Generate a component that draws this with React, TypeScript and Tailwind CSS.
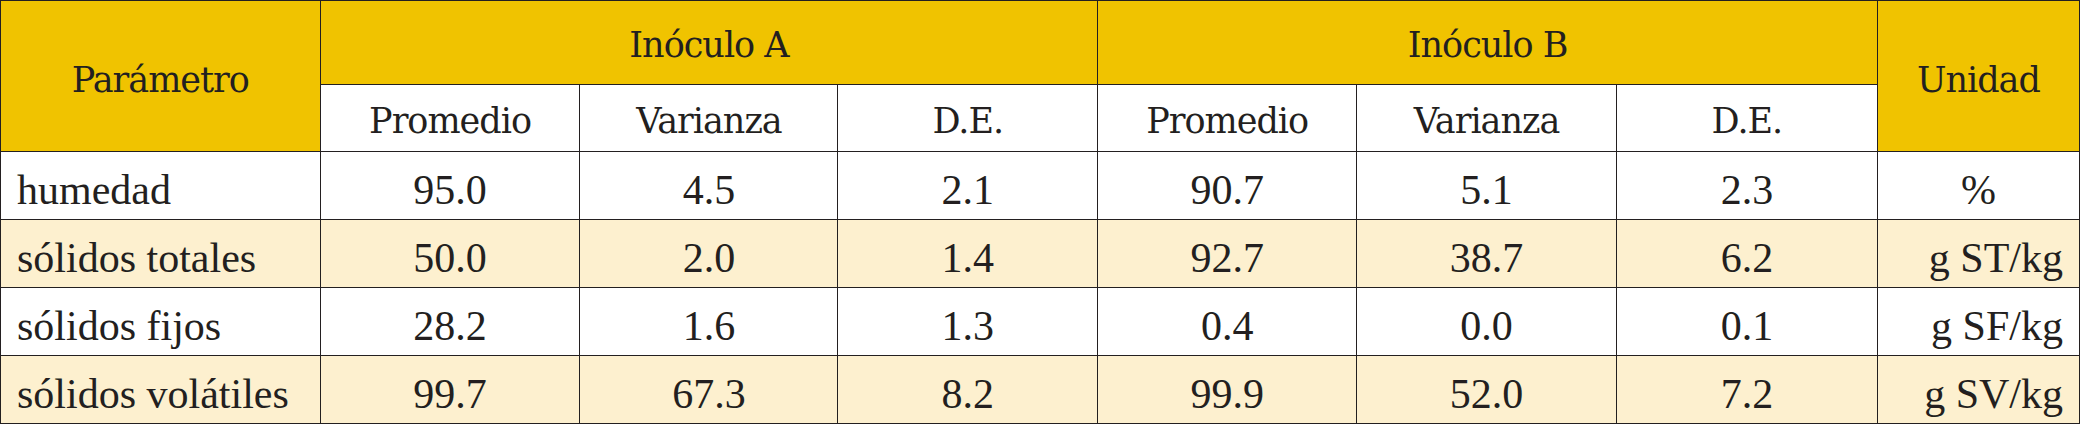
const rows = [
  { p: "humedad", v: ["95.0", "4.5", "2.1", "90.7", "5.1", "2.3"], u: "%", alt: false },
  { p: "sólidos totales", v: ["50.0", "2.0", "1.4", "92.7", "38.7", "6.2"], u: "g ST/kg", alt: true },
  { p: "sólidos fijos", v: ["28.2", "1.6", "1.3", "0.4", "0.0", "0.1"], u: "g SF/kg", alt: false },
  { p: "sólidos volátiles", v: ["99.7", "67.3", "8.2", "99.9", "52.0", "7.2"], u: "g SV/kg", alt: true },
];

function Head({ children, span, pad }: { children: React.ReactNode; span: string; pad: string }) {
  return (
    <div className={`${span} ${pad} flex items-center justify-center [font-family:'DejaVu_Serif'] text-[35px] tracking-[-1px]`}>
      {children}
    </div>
  );
}

export default function App() {
  return (
    <div className="w-[2080px] h-[424px] grid grid-cols-[320fr_260fr_258fr_260fr_259fr_260fr_261fr_202fr] grid-rows-[83px_66px_67px_67px_67px_67px] gap-px p-px bg-[#231f20] [font-family:'Liberation_Serif'] text-[42px] leading-none text-[#231f20]">
      <Head span="row-span-2 bg-[#f0c300]" pad="pt-[8px]">Parámetro</Head>
      <Head span="col-span-3 bg-[#f0c300]" pad="pt-[6px]">Inóculo A</Head>
      <Head span="col-span-3 bg-[#f0c300]" pad="pt-[6px]">Inóculo B</Head>
      <Head span="row-span-2 bg-[#f0c300]" pad="pt-[8px]">Unidad</Head>
      {["Promedio", "Varianza", "D.E.", "Promedio", "Varianza", "D.E."].map((t, i) => (
        <Head key={i} span="bg-white" pad="pt-[6px]">{t}</Head>
      ))}
      {rows.map((r) => (
        <div key={r.p} className="contents">
          <div className={`flex items-center pl-[16px] pt-[8px] ${r.alt ? "bg-[#fdf0cf]" : "bg-white"}`}>{r.p}</div>
          {r.v.map((v, i) => (
            <div key={i} className={`flex items-center justify-center pt-[8px] ${r.alt ? "bg-[#fdf0cf]" : "bg-white"}`}>{v}</div>
          ))}
          <div className={`flex items-center pt-[8px] ${r.u === "%" ? "justify-center" : "justify-end pr-[16px]"} ${r.alt ? "bg-[#fdf0cf]" : "bg-white"}`}>{r.u}</div>
        </div>
      ))}
    </div>
  );
}
